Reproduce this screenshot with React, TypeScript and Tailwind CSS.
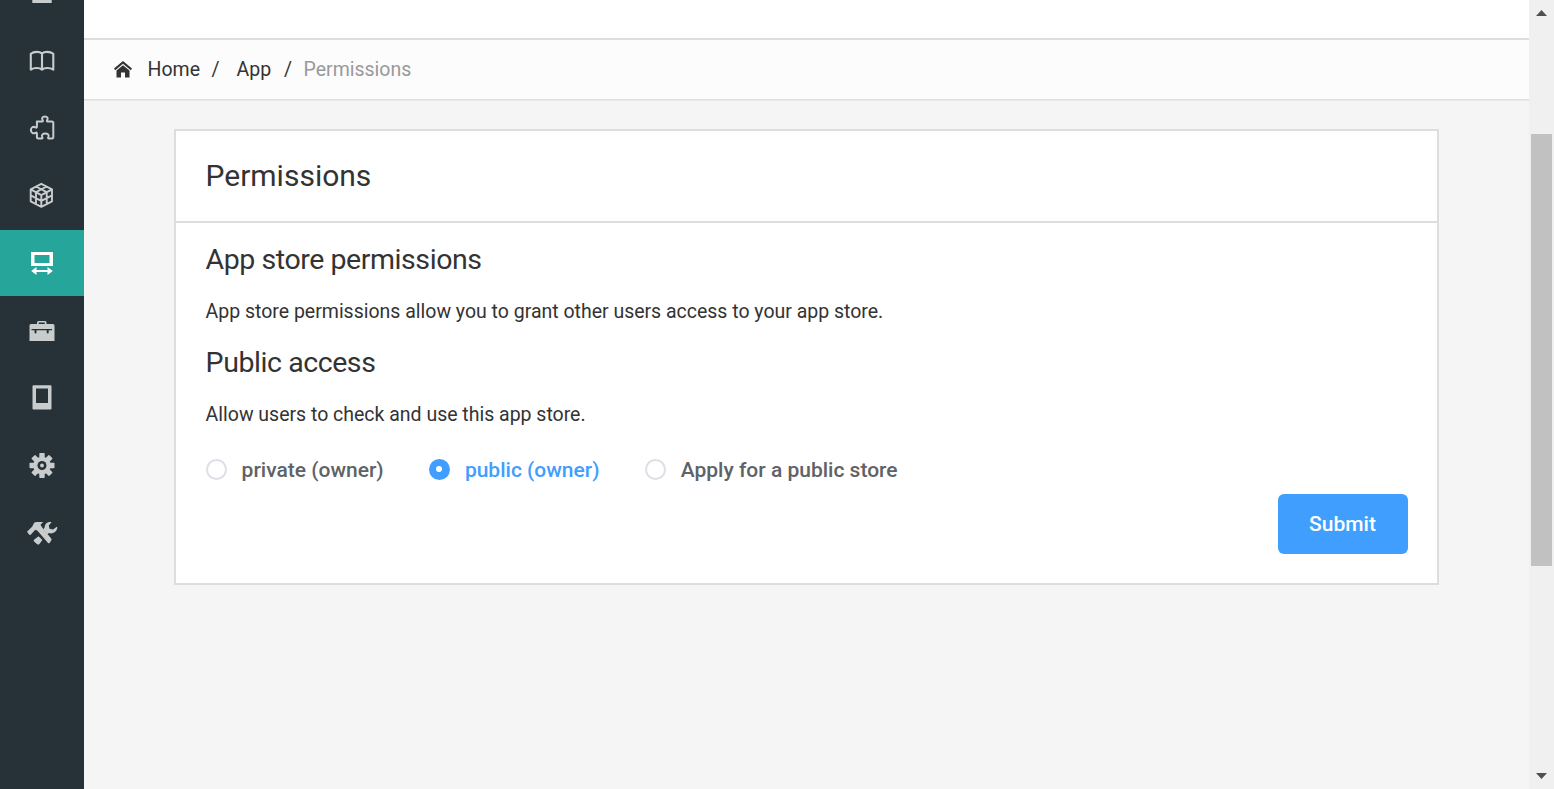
import React, { useState } from 'react';

const Icon = ({ children }: { children: React.ReactNode }) => (
  <svg viewBox="0 0 32 30" className="h-[30px] w-8" fill="none" stroke="none">
    {children}
  </svg>
);

const Screen = () => (
  <Icon>
    <path fill="currentColor" d="M6.3 4h19.4v21H6.3z" />
  </Icon>
);

const Book = () => (
  <Icon>
    <path
      stroke="currentColor"
      strokeWidth="2.1"
      strokeLinejoin="round"
      d="M16 7.6C13.7 5.3 8 5.2 4.8 7.8V23.6C8 21.5 13.7 21.6 16 23.6C18.3 21.6 24 21.5 27.3 23.6V7.8C24 5.2 18.3 5.3 16 7.6V23.4"
    />
  </Icon>
);

const Puzzle = () => (
  <Icon>
    <path
      stroke="currentColor"
      strokeWidth="2"
      strokeLinejoin="round"
      d="M10.900 8.600h5.200c.9 0 1-.7.6-1.400c-1.500-2.200 0-3.800 2.200-3.800s3.700 1.600 2.200 3.800c-.4.700-.3 1.400.6 1.400h4.100c.9 0 1.500.6 1.500 1.500v14c0 .9-.6 1.500-1.500 1.500h-2.900c-.9 0-1-.7-.6-1.400c1.200-2.300-.8-3.800-3-3.800s-4.200 1.500-3 3.800c.4.700.3 1.400-.6 1.400h-3.300c-.9 0-1.500-.6-1.500-1.500v-3.700c0-.9-.7-1-1.400-.6c-2.300 1.300-4.600 0-4.600-2.700s2.300-4 4.600-2.700c.7.4 1.400.3 1.400-.6z"
    />
  </Icon>
);

const Cube = () => (
  <Icon>
    <path
      stroke="currentColor"
      strokeWidth="1.900"
      strokeLinejoin="round"
      d="M15.300 2.800L26 8.300v12L15.300 25.800L4.700 20.300V8.300zM4.700 8.300L15.300 14.100L26 8.300M15.300 14.100V25.800M10 5.500L20.700 11.200V23M20.700 5.500L10 11.200V23M4.700 14.300L15.300 19.900L26 14.300"
    />
  </Icon>
);

const Resize = () => (
  <Icon>
    <path
      fill="currentColor"
      fillRule="evenodd"
      d="M5 4h22v14H5zM8.500 7v8h15V7zM5.200 23l5.300-4v3h11v-3l5.300 4l-5.300 4v-3h-11v3z"
    />
  </Icon>
);

const Briefcase = () => (
  <Icon>
    <path
      fill="currentColor"
      fillRule="evenodd"
      d="M11 8V6.500Q11 5 12.500 5h6.500Q20.500 5 20.500 6.500V8H27Q28.500 8 28.500 9.500V25h-25V9.500Q3.500 8 5 8zM12.700 6.500V8h6.100V6.500zM5.500 13v1.200h3v2.300q0 1 1 1t1-1v-2.300h10.200v2.300q0 1 1 1t1-1v-2.300h3.300v-1.200z"
    />
  </Icon>
);

const Tablet = () => (
  <Icon>
    <path
      fill="currentColor"
      fillRule="evenodd"
      d="M7.500 2.200h17q1 0 1 1v22.300q0 1-1 1h-17q-1 0-1-1V3.200q0-1 1-1zM10 5.400v14.500h12V5.400z"
    />
  </Icon>
);

const Gear = () => (
  <Icon>
    <g fill="currentColor">
      {[0, 45, 90, 135].map((angle) => (
        <rect key={angle} x="13.300" y="2" width="5.400" height="25" rx=".7" transform={`rotate(${angle} 16 14.500)`} />
      ))}
      <circle cx="16" cy="14.500" r="8.800" />
    </g>
    <circle cx="16" cy="14.500" r="4.500" fill="#263238" />
    <circle cx="16" cy="14.500" r="1.900" fill="currentColor" />
  </Icon>
);

const Tools = () => (
  <Icon>
    <path
      fill="currentColor"
      d="M1 13.800L6.300 8.500L8 4.900Q9 4 10.500 4H17.200L14.500 6.800L16 9.300L25.200 20.500Q26 21.500 25.200 22.500L23.800 24.700Q22.800 25.700 21.800 24.700L11.500 12.800L9.300 11.800L4.700 16.800Q3.700 17.300 3 16.500z"
    />
    <path
      fill="currentColor"
      d="M25.500 4.200L22.800 7.400L23.500 10.800L27 11.600L30.800 8.800Q31.600 9.200 31.200 10.500Q29.800 15.200 24.800 15.500L22.800 15L21.500 16.200L17.300 11.300L18.600 9.600Q18.600 5.500 22.200 4.200Q24.400 3.400 25.500 4.200zM12.500 18.300L16.400 22.100L13.200 26.200Q12.200 27 11.200 26.200L8 23.500Q7.300 22.600 8 21.700z"
    />
  </Icon>
);

const navItems = [
  { name: 'Screen', Glyph: Screen },
  { name: 'Docs', Glyph: Book },
  { name: 'Plugins', Glyph: Puzzle },
  { name: 'Packages', Glyph: Cube },
  { name: 'App', Glyph: Resize },
  { name: 'Business', Glyph: Briefcase },
  { name: 'Devices', Glyph: Tablet },
  { name: 'Settings', Glyph: Gear },
  { name: 'Tools', Glyph: Tools },
];

const Sidebar = () => (
  <nav className="w-[84px] shrink-0 overflow-hidden bg-[#263238]">
    <ul className="-mt-10 flex flex-col gap-[1.5px]">
      {navItems.map(({ name, Glyph }) => (
        <li
          key={name}
          className={
            name === 'App'
              ? 'flex h-[66px] items-center justify-center bg-[#26a69a] text-white'
              : 'flex h-[66px] items-center justify-center text-[#c9cccd]'
          }
        >
          <Glyph />
        </li>
      ))}
    </ul>
  </nav>
);

const Breadcrumb = () => (
  <div className="shrink-0 border-b border-[#e9e9e9]">
    <div className="flex h-[62px] items-center border-t-2 border-b border-[#ddd] bg-[#fcfcfc] pl-[30px] text-[19.5px] leading-[30px]">
      <svg viewBox="0 0 18 17" className="mr-[15.5px] h-[17px] w-[18px]" fill="#333">
        <path d="M9 0L18 7.500L16.800 9.200L9 2.800L1.200 9.200L0 7.500z" />
        <path d="M9 4.200L15.500 9.500V16.500H11V11.500H7V16.500H2.500V9.500z" />
      </svg>
      <span className="w-16">Home</span>
      <span className="w-[25px]">/</span>
      <span className="w-[47.5px]">App</span>
      <span className="w-[19.5px]">/</span>
      <span className="text-[#999]">Permissions</span>
    </div>
  </div>
);

const options = ['private (owner)', 'public (owner)', 'Apply for a public store'];

const PermissionsCard = () => {
  const [selected, setSelected] = useState(1);
  return (
    <section className="mx-[90px] mt-7 h-[456px] border-2 border-[#ddd] bg-white">
      <header className="flex h-[92px] items-center border-b-2 border-[#ddd] px-[29.5px] pb-0.5">
        <h1 className="text-[30px] leading-[45px]">Permissions</h1>
      </header>
      <div className="pr-[29px] pl-[29.6px] pt-[14px]">
        <h2 className="text-[28.5px] leading-[45px] tracking-[-0.43px]">App store permissions</h2>
        <p className="mt-[15px] text-[19.5px] leading-[30px] tracking-[-0.01px]">
          App store permissions allow you to grant other users access to your app store.
        </p>
        <h2 className="mt-[13px] text-[28.5px] leading-[45px] tracking-[-0.43px]">Public access</h2>
        <p className="mt-[15px] text-[19.5px] leading-[30px] tracking-[-0.01px]">Allow users to check and use this app store.</p>
        <div className="mt-[25px] flex gap-[45.2px]">
          {options.map((label, index) => (
            <button
              key={label}
              type="button"
              onClick={() => setSelected(index)}
              className={
                selected === index
                  ? 'flex items-center gap-[15px] text-[21px] leading-[30px] font-medium text-[#409eff]'
                  : 'flex items-center gap-[15px] text-[21px] leading-[30px] font-medium text-[#606266]'
              }
            >
              <span
                className={
                  selected === index
                    ? 'mb-0.5 flex size-[21px] items-center justify-center rounded-full bg-[#409eff]'
                    : 'mb-0.5 size-[21px] rounded-full border-2 border-[#dcdfe6] bg-white'
                }
              >
                {selected === index && <span className="size-1.5 rounded-full bg-white" />}
              </span>
              {label}
            </button>
          ))}
        </div>
        <div className="mt-[9px] flex justify-end">
          <button type="button" className="h-[60px] w-[130px] rounded-[6px] bg-[#409eff] pt-0.5 pr-px text-[21px] font-medium text-white">
            Submit
          </button>
        </div>
      </div>
    </section>
  );
};

const Scrollbar = () => (
  <div className="flex w-[25px] shrink-0 flex-col items-center bg-[#f0f0f0]">
    <svg viewBox="0 0 11 6" className="mt-[10px] h-1.5 w-[11px]" fill="#505050">
      <path d="M5.500 0L11 6H0z" />
    </svg>
    <div className="mt-[118px] h-[432px] w-[21px] bg-[#c1c1c1]" />
    <svg viewBox="0 0 11 6" className="mt-auto mb-[10px] h-1.5 w-[11px]" fill="#505050">
      <path d="M0 0H11L5.500 6z" />
    </svg>
  </div>
);

export default function App() {
  return (
    <div className="flex h-[789px] w-[1554px] overflow-hidden bg-[#f5f5f5] font-[Roboto,sans-serif] text-[#333]">
      <Sidebar />
      <main className="flex min-w-0 flex-1 flex-col">
        <div className="h-[38px] shrink-0 bg-white" />
        <Breadcrumb />
        <PermissionsCard />
      </main>
      <Scrollbar />
    </div>
  );
}
